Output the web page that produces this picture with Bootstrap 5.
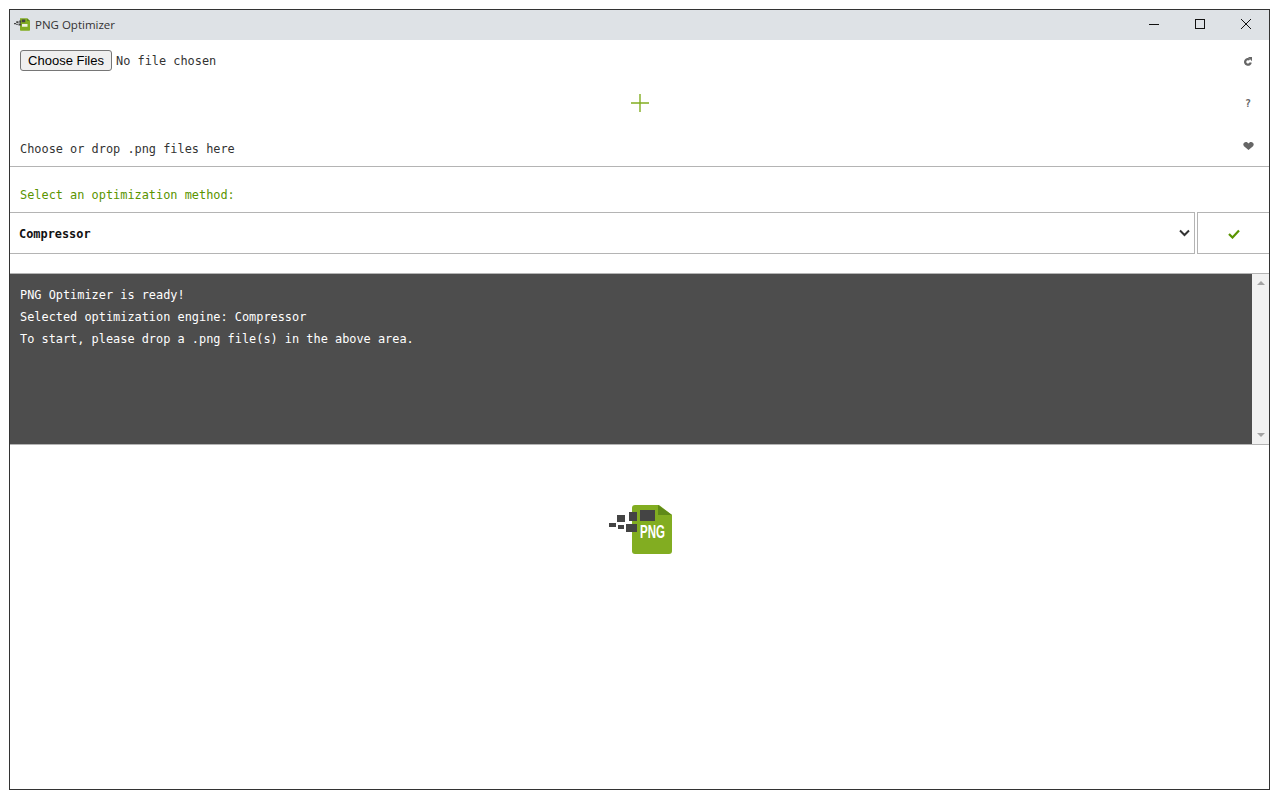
<!DOCTYPE html>
<html lang="en">
<head>
<meta charset="utf-8">
<title>PNG Optimizer</title>
<link rel="stylesheet" href="https://cdn.jsdelivr.net/npm/bootstrap@5.3.0/dist/css/bootstrap.min.css">
<style>
html,body{height:100%;background:#fff;overflow:hidden}
body{padding:9px;font-family:"DejaVu Sans Mono","Liberation Mono",monospace;font-size:11.9px;color:#333}
.app-window{width:1261px;height:781px;border:1px solid #333;background:#fff}
.app-title{height:30px;padding-bottom:2px;background:#dee2e6;font:11.5px "Open Sans","Liberation Sans",sans-serif;color:#333}
.app-title-icon{margin:0 5px 0 4px}
.win-btn{width:46px;height:28px}
.drop-zone{height:127px;border-bottom:1px solid #b4b4b4;padding:10px 14px 0 10px}
.drop-main{min-width:0}
.file-input{font-size:11.9px;color:#333;display:block;height:21px;line-height:21px}
.file-input::file-selector-button{font:13px "Liberation Sans",sans-serif;width:92px;height:21px;padding:0 0 1px;margin-right:4px;background:#efefef;border:1px solid #767676;border-radius:3px;color:#000}
.drop-plus{height:40px;padding-left:18px}
.drop-text{line-height:16px;margin-top:22px}
.side-icons{width:14px;height:100px;padding-top:7px}
.win-q{color:#666;font-size:10px;line-height:12px}
.method-label{color:#5a9400;height:45px;padding:20px 10px 0;line-height:16px}
.method-row{gap:2px;height:42px}
.method-select{flex:1 1 auto;height:42px;border:1px solid #b4b4b4;border-left:0;padding:0 4px 0 9px;font-weight:700;font-size:11.9px;color:#111}
.method-label-text{padding-top:4px}
.method-go{width:72px;height:42px;padding-top:2px;border:1px solid #b4b4b4;border-right:0}
.console-box{height:172px;margin-top:19px;border-top:1px solid #b4b4b4;border-bottom:1px solid #b4b4b4;background:#4d4d4d}
.console-text{color:#fff;padding:10px;line-height:22px}
.console-line{height:22px;white-space:pre}
.scroll-track{width:17px;padding:7px 0;background:#f1f1f1}
.logo-area{padding-top:60px}
.logo-png{font:700 18px "Liberation Sans",sans-serif;fill:#fff}
</style>
</head>
<body>
<div class="app-window d-flex flex-column">
  <div class="app-title d-flex align-items-center">
    <svg class="app-title-icon" width="16" height="13" viewBox="0 0 64 52">
      <path d="M24 1h28l12 11v36a3 3 0 0 1-3 3H27a3 3 0 0 1-3-3z" fill="#82ad21"/>
      <path d="M52 1l12 11H52z" fill="#5f8a18"/>
      <path d="M0 20h8v5H0zM9 13h9v7H9zM9 23h6v5H9zM21 10h7v9h-7zM18 22h11v8H18zM31 6h14v11H31z" fill="#444"/>
      <rect x="32" y="24" width="22" height="11" fill="#eef3dd"/>
    </svg>
    <span class="flex-grow-1">PNG Optimizer</span>
    <div class="win-btn d-flex align-items-center justify-content-center">
      <svg width="10" height="10" viewBox="0 0 10 10"><path d="M0 5.500h10" stroke="#111" fill="none"/></svg>
    </div>
    <div class="win-btn d-flex align-items-center justify-content-center">
      <svg width="10" height="10" viewBox="0 0 10 10"><rect x=".5" y=".5" width="9" height="9" stroke="#111" fill="none"/></svg>
    </div>
    <div class="win-btn d-flex align-items-center justify-content-center">
      <svg width="10" height="10" viewBox="0 0 10 10"><path d="M0 0l10 10M10 0L0 10" stroke="#111" fill="none"/></svg>
    </div>
  </div>

  <div class="drop-zone d-flex">
    <div class="drop-main flex-grow-1">
      <input class="file-input" type="file" accept=".png" multiple>
      <div class="drop-plus d-flex align-items-center justify-content-center mt-2 pt-2">
        <svg width="18" height="18" viewBox="0 0 18 18"><path d="M9 0v18M0 9h18" stroke="#82ad21" stroke-width="1.4" fill="none"/></svg>
      </div>
      <div class="drop-text">Choose or drop .png files here</div>
    </div>
    <div class="side-icons d-flex flex-column justify-content-between align-items-center">
      <svg width="8" height="9" viewBox="0 0 8 9"><path d="M6.700 5.500A2.800 2.800 0 1 1 5.700 2.700" stroke="#666" stroke-width="2.300" fill="none"/><path d="M4 0H8v4.300z" fill="#666"/></svg>
      <span class="fw-bold win-q">?</span>
      <svg width="11" height="8" viewBox="0 0 11 8"><path d="M5.500 8L1 4.200A2.500 2.500 0 0 1 2.800 0C4 0 5 .7 5.500 1.600 6 .7 7 0 8.200 0A2.500 2.500 0 0 1 10 4.200z" fill="#666"/></svg>
    </div>
  </div>

  <div class="method-label">Select an optimization method:</div>
  <div class="method-row d-flex">
    <div class="method-select d-flex align-items-center justify-content-between">
      <span class="method-label-text">Compressor</span>
      <svg width="11" height="8" viewBox="0 0 11 8"><path d="M1 1.500l4.500 4.500L10 1.500" stroke="#333" stroke-width="2" fill="none"/></svg>
    </div>
    <div class="method-go d-flex align-items-center justify-content-center">
      <svg width="12" height="10" viewBox="0 0 12 10"><path d="M1 5l3.500 3.500L11 1.500" stroke="#5a9400" stroke-width="2.200" fill="none"/></svg>
    </div>
  </div>

  <div class="console-box d-flex">
    <div class="console-text flex-grow-1">
      <div class="console-line">PNG Optimizer is ready!</div>
      <div class="console-line">Selected optimization engine: Compressor</div>
      <div class="console-line">To start, please drop a .png file(s) in the above area.</div>
    </div>
    <div class="scroll-track d-flex flex-column justify-content-between align-items-center">
      <svg width="8" height="4" viewBox="0 0 8 4"><path d="M4 0L8 4H0z" fill="#a3a3a3"/></svg>
      <svg width="8" height="4" viewBox="0 0 8 4"><path d="M0 0h8L4 4z" fill="#a3a3a3"/></svg>
    </div>
  </div>

  <div class="logo-area d-flex justify-content-center">
    <svg width="64" height="49" viewBox="0 0 64 49">
      <path d="M24 3a3 3 0 0 1 3-3h24l13 10v36a3 3 0 0 1-3 3H27a3 3 0 0 1-3-3z" fill="#82ad21"/>
      <path d="M50 0l14 10H50z" fill="#5f8a18"/>
      <path d="M1 18h7v4H1zM9 10h8v7H9zM10 20h6v4h-6zM21 7h8v9h-8zM18 19h11v8H18zM32 5h15v11H32z" fill="#444"/>
      <text transform="translate(32 33) scale(.64 1)" class="logo-png">PNG</text>
    </svg>
  </div>
</div>
<script src="https://cdn.jsdelivr.net/npm/bootstrap@5.3.0/dist/js/bootstrap.bundle.min.js"></script>
</body>
</html>
